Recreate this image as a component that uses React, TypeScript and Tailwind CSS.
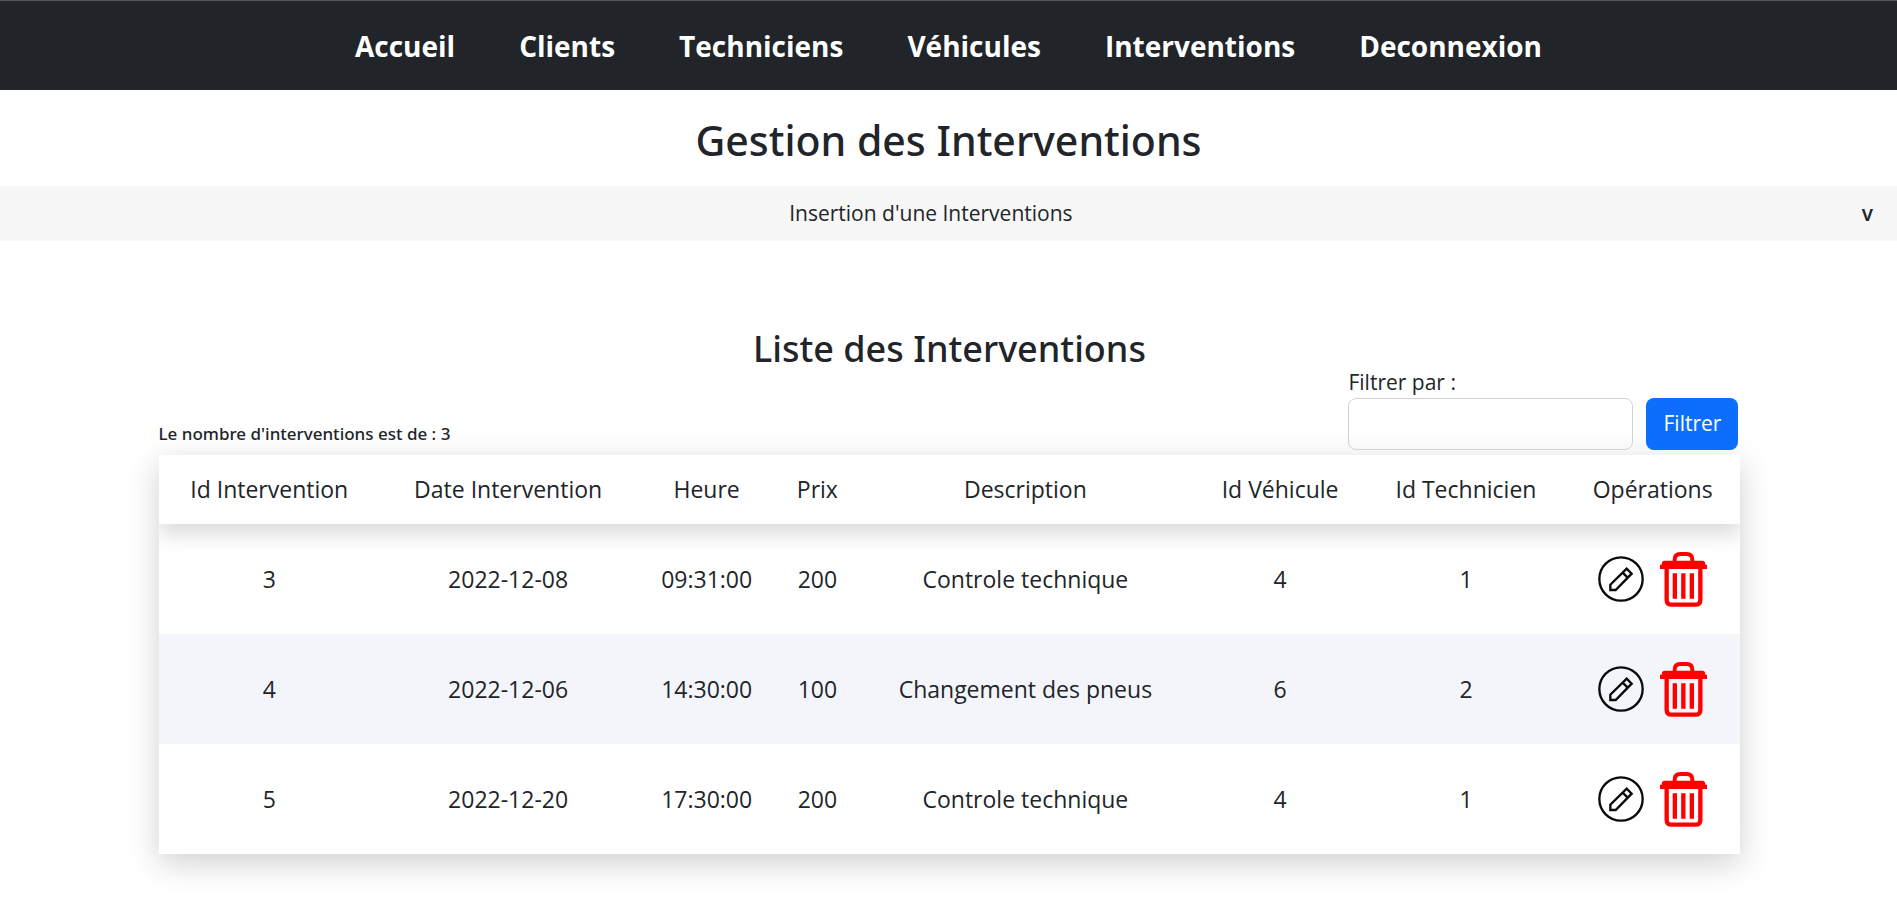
const links = ["Accueil", "Clients", "Techniciens", "Véhicules", "Interventions", "Deconnexion"];

const columns = [
  { label: "Id Intervention", width: "w-[14%]" },
  { label: "Date Intervention", width: "w-[16.2%]" },
  { label: "Heure", width: "w-[8.9%]" },
  { label: "Prix", width: "w-[5.1%]" },
  { label: "Description", width: "w-[21.2%]" },
  { label: "Id Véhicule", width: "w-[11%]" },
  { label: "Id Technicien", width: "w-[12.5%]" },
  { label: "Opérations", width: "w-[11.1%]" },
];

const rows = [
  ["3", "2022-12-08", "09:31:00", "200", "Controle technique", "4", "1"],
  ["4", "2022-12-06", "14:30:00", "100", "Changement des pneus", "6", "2"],
  ["5", "2022-12-20", "17:30:00", "200", "Controle technique", "4", "1"],
];

function EditIcon() {
  return (
    <svg viewBox="0 0 138 138" className="size-[46px]" fill="none" stroke="#0a0a0a" strokeWidth="7">
      <circle cx="69" cy="69" r="65" />
      <path d="M37 102V86L86 38L101 53L53 102Z M74 50L89 65" />
    </svg>
  );
}

function TrashIcon() {
  return (
    <svg viewBox="0 0 141 165" className="h-[55px] w-[47px]" fill="none" stroke="#ff0000">
      <path strokeWidth="12" d="M44 30V23Q44 6 61 6H80Q97 6 97 23V30" />
      <path fill="#ff0000" stroke="none" d="M14 26H127Q136 26 136 38H141V51H0V38H5Q5 26 14 26Z" />
      <path strokeWidth="13" d="M20 50V143Q20 158 35 158H106Q121 158 121 143V50" />
      <path strokeWidth="13" d="M44.500 64V140M70 64V140M95.500 64V140" />
    </svg>
  );
}

export default function App() {
  return (
    <div className="min-h-screen bg-white font-['Open_Sans','Noto_Sans',sans-serif] text-[#212529]">
      <nav className="flex h-[90px] items-center justify-center gap-16 border-t border-[#555] bg-[#212529]">
        {links.map((link) => (
          <a key={link} href="#" className="text-[28px] font-bold text-white">
            {link}
          </a>
        ))}
      </nav>

      <h1 className="pt-[26px] pb-[22px] text-center font-['Noto_Sans',sans-serif] text-[41px] leading-12 font-medium">
        Gestion des Interventions
      </h1>

      <button type="button" className="flex h-[55px] w-full items-center bg-[#f7f7f7] pr-6 text-[21px]">
        <span className="flex-1 text-center">Insertion d'une Interventions</span>
        <span className="font-semibold">v</span>
      </button>

      <main className="mx-auto w-[83.5%] pt-[84px] pb-16 pl-0.5">
        <h2 className="text-center font-['Noto_Sans',sans-serif] text-[36px] leading-12 font-medium">
          Liste des Interventions
        </h2>
        <div className="-mt-[7px] flex items-end justify-between pr-0.5 pb-[5px]">
          <h5 className="font-['Noto_Sans',sans-serif] text-[17px] leading-8 font-medium">
            Le nombre d'interventions est de : 3
          </h5>
          <form className="flex items-end gap-[13px]">
            <div className="flex flex-col">
              <label htmlFor="filtre" className="text-[21px] leading-8">
                Filtrer par :
              </label>
              <input
                id="filtre"
                type="text"
                className="h-[52px] w-[285px] rounded-lg border border-[#ced4da] px-4 text-[21px]"
              />
            </div>
            <button type="button" className="h-[52px] w-[92px] rounded-lg bg-[#0d6efd] text-[21px] text-white">
              Filtrer
            </button>
          </form>
        </div>

        <div className="shadow-[0_9px_30px_rgba(0,0,0,0.19)]">
          <div className="overflow-hidden bg-white">
            <table className="w-full table-fixed border-collapse text-center text-[23px]">
              <thead className="relative bg-white shadow-[0_10px_20px_rgba(0,0,0,0.15)]">
                <tr className="h-[69px]">
                  {columns.map((column) => (
                    <th key={column.label} scope="col" className={`${column.width} font-normal`}>
                      {column.label}
                    </th>
                  ))}
                </tr>
              </thead>
              <tbody>
                {rows.map((row) => (
                  <tr key={row[0]} className="h-[110px] even:bg-[#f4f5fb]">
                    {row.map((cell, index) => (
                      <td key={index}>{cell}</td>
                    ))}
                    <td>
                      <div className="flex items-center justify-center gap-4">
                        <a href="#" aria-label="Modifier">
                          <EditIcon />
                        </a>
                        <a href="#" aria-label="Supprimer">
                          <TrashIcon />
                        </a>
                      </div>
                    </td>
                  </tr>
                ))}
              </tbody>
            </table>
          </div>
        </div>
      </main>
    </div>
  );
}
